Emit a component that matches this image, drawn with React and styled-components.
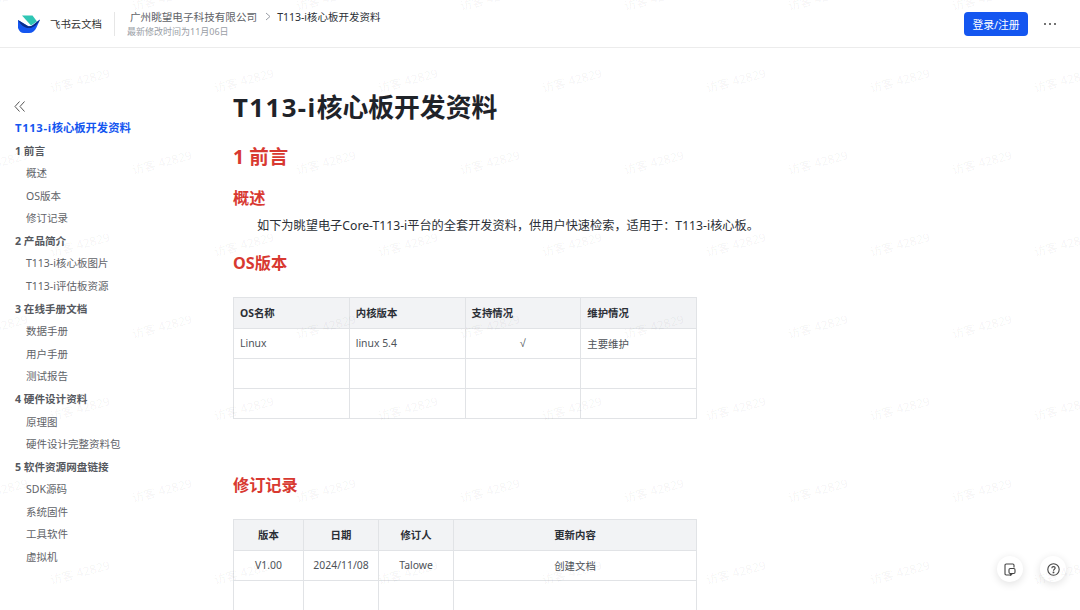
import React from "react";
import styled, { createGlobalStyle } from "styled-components";

const GlobalStyle = createGlobalStyle`
  html, body {
    margin: 0;
    height: 100%;
    overflow: hidden;
    background: #fff;
  }
  body {
    font-family: "Noto Sans", "Noto Sans CJK SC", sans-serif;
    color: #1f2329;
  }
`;

const Page = styled.div`
  position: relative;
  width: 1080px;
  height: 610px;
  overflow: hidden;
`;

// Header
const Header = styled.header`
  display: flex;
  align-items: center;
  height: 47px;
  padding: 0 23px 0 18px;
  border-bottom: 1px solid #ececec;
`;

const Brand = styled.div`
  display: flex;
  align-items: center;
  gap: 10px;
  width: 97px;
  font-size: 10.4px;
  color: #333;
`;

const Divider = styled.div`
  width: 1px;
  height: 24px;
  margin: 0 12px 0 -1px;
  background: #e6e6e6;
`;

const DocInfo = styled.div`
  display: flex;
  flex-direction: column;
  flex: 1;
  gap: 2px;
`;

const Crumbs = styled.div`
  display: flex;
  align-items: center;
  padding-left: 3px;
  height: 15px;
  font-size: 10.6px;
  color: #5f6368;
`;

const CrumbCurrent = styled.span`
  color: #2b2f36;
  font-size: 10.5px;
`;

const CrumbArrow = styled.svg`
  width: 6px;
  height: 9px;
  margin: 0 6px 0 8px;
`;

const Modified = styled.div`
  font-size: 9px;
  line-height: 12px;
  color: #9a9ea6;
`;

const LoginButton = styled.button`
  width: 64px;
  height: 24px;
  padding: 0;
  border: 0;
  border-radius: 4px;
  background: #1456f0;
  color: #fff;
  font: inherit;
  font-size: 10.8px;
`;

const MoreButton = styled.svg`
  width: 14px;
  height: 4px;
  margin-left: 15px;
`;

// Body
const Body = styled.div`
  display: flex;
`;

const Sidebar = styled.nav`
  width: 218px;
  padding: 53px 0 0 15px;
  flex-shrink: 0;
`;

const Collapse = styled.svg`
  display: block;
  width: 12px;
  height: 11px;
  margin: 0 0 5px -1px;
`;

const NavItem = styled.div`
  height: 22.58px;
  line-height: 22.58px;
  white-space: nowrap;
  font-size: ${props =>
    props.$level === 0 ? "11.3px" : props.$level === 1 ? "10.6px" : "10.5px"};
  font-weight: ${props => (props.$level === 2 ? 400 : 700)};
  padding-left: ${props => (props.$level === 2 ? "11px" : "0")};
  color: ${props =>
    props.$active ? "#1456f0" : props.$level === 2 ? "#5f6368" : "#55585e"};
`;

// Bold latin in the reference runs wider than the CJK stack gives
const WideLatin = styled.span`
  letter-spacing: 0.055em;
`;

const Main = styled.main`
  flex: 1;
  padding-top: 37px;
`;

const Title = styled.h1`
  margin: 0 0 14px;
  font-size: 25.8px;
  line-height: 44px;
  font-weight: 700;
  color: #1f2329;
`;

const Heading1 = styled.h2`
  margin: 0 0 15px;
  font-size: 19.5px;
  line-height: 28px;
  font-weight: 700;
  color: #d83931;
`;

const Heading2 = styled.h3`
  margin: ${props => props.$margin || "0"};
  font-size: 16.2px;
  line-height: 24px;
  font-weight: 700;
  color: #d83931;
`;

const Paragraph = styled.p`
  margin: 6px 0 15px;
  padding-left: 24px;
  font-size: 12.2px;
  line-height: 20px;
  color: #2b2f36;
`;

const Table = styled.table`
  table-layout: fixed;
  width: 464px;
  margin: ${props => props.$margin || "0"};
  border-collapse: collapse;
  font-size: 10.4px;
  color: #4e5258;

  th, td {
    height: 30px;
    padding: 0 6px 1px;
    box-sizing: border-box;
    border: 1px solid #e1e3e6;
    font-weight: 400;
    text-align: ${props => (props.$center ? "center" : "left")};
  }

  th {
    height: 31px;
    background: #f2f3f5;
    font-weight: 700;
    color: #2b2f36;
  }
`;

const CheckCell = styled.td`
  && {
    text-align: center;
    font-family: "Liberation Sans", sans-serif;
    font-size: 11px;
  }
`;

// Floating helpers, over the page
const FloatingBar = styled.div`
  position: absolute;
  right: 14px;
  bottom: 28px;
  display: flex;
  gap: 17px;
`;

const RoundButton = styled.div`
  display: flex;
  align-items: center;
  justify-content: center;
  width: 26px;
  height: 26px;
  border-radius: 50%;
  background: #fff;
  box-shadow: 0 2px 8px rgba(0, 0, 0, 0.12);
  color: #444;
`;

// Watermark layer, over the page
const Watermarks = styled.div`
  position: absolute;
  inset: -42px 0 0;
  pointer-events: none;
`;

const WatermarkRow = styled.div`
  display: flex;
  height: 82px;
  margin-left: ${props => props.$shift}px;
`;

const WatermarkText = styled.span`
  flex: 0 0 164px;
  text-align: center;
  white-space: nowrap;
  line-height: 82px;
  font-size: 12px;
  color: rgba(0, 0, 0, 0.05);
  transform: rotate(-15deg);
`;

const navItems = [
  { label: "T113-i", rest: "核心板开发资料", level: 0, active: true },
  { label: "1 前言", level: 1 },
  { label: "概述", level: 2 },
  { label: "OS版本", level: 2 },
  { label: "修订记录", level: 2 },
  { label: "2 产品简介", level: 1 },
  { label: "T113-i核心板图片", level: 2 },
  { label: "T113-i评估板资源", level: 2 },
  { label: "3 在线手册文档", level: 1 },
  { label: "数据手册", level: 2 },
  { label: "用户手册", level: 2 },
  { label: "测试报告", level: 2 },
  { label: "4 硬件设计资料", level: 1 },
  { label: "原理图", level: 2 },
  { label: "硬件设计完整资料包", level: 2 },
  { label: "5 软件资源网盘链接", level: 1 },
  { label: "SDK源码", level: 2 },
  { label: "系统固件", level: 2 },
  { label: "工具软件", level: 2 },
  { label: "虚拟机", level: 2 }
];

const Logo = () => (
  <svg width="22" height="18" viewBox="0 0 22 18">
    <path d="M4 0.5H14.5L19 6.5L13 10.5Z" fill="#2fc6b4" />
    <path d="M0 5L9 10.5C11 11.8 13 11.6 15 10L22 4.5L18.5 12.5C17 16 14.5 18 11 18H6C3 18 1 16 0 13Z" fill="#1456f0" />
    <path d="M0 5L9 10.5C11 11.8 13 11.6 15 10L22 4.5C20 9 16 12.5 12 13C7 13.5 3 10.5 0 5Z" fill="#0b2d8a" />
  </svg>
);

const NotesIcon = () => (
  <svg width="12" height="13" viewBox="0 0 12 13" fill="none" stroke="#444" strokeWidth="1.1">
    <path d="M7.5 12H2.2C1.5 12 1 11.5 1 10.8V2.2C1 1.5 1.5 1 2.2 1H8.8C9.5 1 10 1.5 10 2.2V4.5" />
    <rect x="5" y="5.5" width="6" height="5" rx="1.2" />
    <path d="M6.5 10.5V12L8.5 10.5" />
  </svg>
);

const HelpIcon = () => (
  <svg width="13" height="13" viewBox="0 0 13 13" fill="none" stroke="#444" strokeWidth="1.1">
    <circle cx="6.5" cy="6.5" r="5.7" />
    <path d="M4.8 5.2C4.8 4.2 5.6 3.6 6.5 3.6C7.5 3.6 8.2 4.2 8.2 5.1C8.2 6.3 6.5 6.3 6.5 7.7" />
    <circle cx="6.5" cy="9.4" r="0.4" fill="#444" />
  </svg>
);

export default function App() {
  const rows = Array.from({ length: 9 }, (_, i) => i);
  const columns = Array.from({ length: 8 }, (_, i) => i);

  return (
    <Page>
      <GlobalStyle />
      <Header>
        <Brand>
          <Logo />
          <span>飞书云文档</span>
        </Brand>
        <Divider />
        <DocInfo>
          <Crumbs>
            <span>广州眺望电子科技有限公司</span>
            <CrumbArrow viewBox="0 0 6 9" fill="none" stroke="#9a9ea6" strokeWidth="1">
              <path d="M1 1L5 4.5L1 8" />
            </CrumbArrow>
            <CrumbCurrent>T113-i核心板开发资料</CrumbCurrent>
          </Crumbs>
          <Modified>最新修改时间为11月06日</Modified>
        </DocInfo>
        <LoginButton>登录/注册</LoginButton>
        <MoreButton viewBox="0 0 14 4" fill="#444">
          <circle cx="2" cy="2" r="1" />
          <circle cx="7" cy="2" r="1" />
          <circle cx="12" cy="2" r="1" />
        </MoreButton>
      </Header>

      <Body>
        <Sidebar>
          <Collapse viewBox="0 0 12 11" fill="none" stroke="#555" strokeWidth="1">
            <path d="M5.5 0.5L1 5.5L5.5 10.5" />
            <path d="M10.5 0.5L6 5.5L10.5 10.5" />
          </Collapse>
          {navItems.map(item => (
            <NavItem key={item.label} $level={item.level} $active={item.active}>
              {item.rest ? <WideLatin>{item.label}</WideLatin> : item.label}
              {item.rest}
            </NavItem>
          ))}
        </Sidebar>

        <Main>
          <Title>
            <WideLatin>T113-i</WideLatin>核心板开发资料
          </Title>
          <Heading1>1 前言</Heading1>
          <Heading2>概述</Heading2>
          <Paragraph>
            如下为眺望电子Core-T113-i平台的全套开发资料，供用户快速检索，适用于：T113-i核心板。
          </Paragraph>
          <Heading2 $margin="0 0 22px">OS版本</Heading2>

          <Table $margin="0 0 54px">
            <thead>
              <tr>
                <th>OS名称</th>
                <th>内核版本</th>
                <th>支持情况</th>
                <th>维护情况</th>
              </tr>
            </thead>
            <tbody>
              <tr>
                <td>Linux</td>
                <td>linux 5.4</td>
                <CheckCell>√</CheckCell>
                <td>主要维护</td>
              </tr>
              <tr><td /><td /><td /><td /></tr>
              <tr><td /><td /><td /><td /></tr>
            </tbody>
          </Table>

          <Heading2 $margin="0 0 22px">修订记录</Heading2>

          <Table $center>
            <colgroup>
              <col style={{ width: 70 }} />
              <col style={{ width: 75 }} />
              <col style={{ width: 75 }} />
              <col />
            </colgroup>
            <thead>
              <tr>
                <th>版本</th>
                <th>日期</th>
                <th>修订人</th>
                <th>更新内容</th>
              </tr>
            </thead>
            <tbody>
              <tr>
                <td>V1.00</td>
                <td>2024/11/08</td>
                <td>Talowe</td>
                <td>创建文档</td>
              </tr>
              <tr><td /><td /><td /><td /></tr>
            </tbody>
          </Table>
        </Main>
      </Body>

      <FloatingBar>
        <RoundButton><NotesIcon /></RoundButton>
        <RoundButton><HelpIcon /></RoundButton>
      </FloatingBar>

      <Watermarks>
        {rows.map(r => (
          <WatermarkRow key={r} $shift={r % 2 === 0 ? -84 : -2}>
            {columns.map(c => (
              <WatermarkText key={c}>访客 42829</WatermarkText>
            ))}
          </WatermarkRow>
        ))}
      </Watermarks>
    </Page>
  );
}
